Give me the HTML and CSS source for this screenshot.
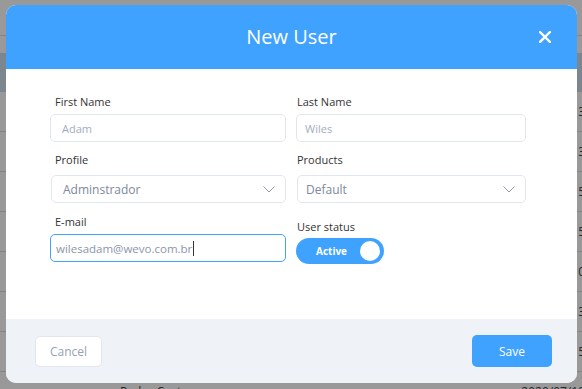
FILE: index.html
```html
<!DOCTYPE html>
<html lang="en">

<head>
    <meta charset="UTF-8">
    <title>New User</title>
    <link rel="stylesheet" href="styles.css">
</head>

<body>

    <main class="page">
        <div class="toolbar"></div>
        <div class="list">
            <div class="list-head"></div>
            <div class="list-row"><span class="col-name"></span><span class="col-date">13</span></div>
            <div class="list-row"><span class="col-name"></span><span class="col-date">13</span></div>
            <div class="list-row"><span class="col-name"></span><span class="col-date">15</span></div>
            <div class="list-row"><span class="col-name"></span><span class="col-date">15</span></div>
            <div class="list-row"><span class="col-name"></span><span class="col-date">10</span></div>
            <div class="list-row"><span class="col-name"></span><span class="col-date">13</span></div>
            <div class="list-row"><span class="col-name"></span><span class="col-date">15</span></div>
            <div class="list-row"><span class="col-name">Pedro Costa</span><span class="col-date">2020/07/18</span></div>
        </div>
    </main>

    <div class="overlay"></div>

    <section class="modal">
        <header class="modal-head">
            <h2>New User</h2>
            <button class="close" aria-label="Close">
                <svg width="12" height="12" viewBox="0 0 12 12">
                    <path d="M1 1L11 11M11 1L1 11" stroke="#fff" stroke-width="2.4" stroke-linecap="square" fill="none" />
                </svg>
            </button>
        </header>

        <div class="modal-body">
            <div class="field left row-1">
                <span class="label">First Name</span>
                <div class="control placeholder">Adam</div>
            </div>
            <div class="field right row-1">
                <span class="label">Last Name</span>
                <div class="control placeholder">Wiles</div>
            </div>

            <div class="field left row-2">
                <span class="label">Profile</span>
                <div class="control select">
                    <span>Adminstrador</span>
                    <svg width="12" height="7" viewBox="0 0 12 7">
                        <polyline points="0.5,0.5 6,6 11.5,0.5" stroke="#8f99ab" stroke-width="1" fill="none" />
                    </svg>
                </div>
            </div>
            <div class="field right row-2">
                <span class="label">Products</span>
                <div class="control select">
                    <span>Default</span>
                    <svg width="12" height="7" viewBox="0 0 12 7">
                        <polyline points="0.5,0.5 6,6 11.5,0.5" stroke="#8f99ab" stroke-width="1" fill="none" />
                    </svg>
                </div>
            </div>

            <div class="field left row-3">
                <span class="label">E-mail</span>
                <div class="control focused">wilesadam@wevo.com.br<span class="caret"></span></div>
            </div>
            <div class="field right row-3 status">
                <span class="label">User status</span>
                <div class="toggle">
                    <span>Active</span>
                    <span class="knob"></span>
                </div>
            </div>
        </div>

        <footer class="modal-foot">
            <button class="btn-cancel">Cancel</button>
            <button class="btn-save">Save</button>
        </footer>
    </section>

</body>

</html>
```

FILE: styles.css
```css
* {
    font-family: 'Open Sans', sans-serif;
    margin: 0;
    padding: 0;
    box-sizing: border-box;
}

body {
    background-color: #fff;
    overflow: hidden;
    width: 582px;
    height: 389px;
}

/* page behind the dialog */

.page {
    height: 389px;
    overflow: hidden;
}

.toolbar {
    height: 36px;
    border-bottom: 1px solid #ddd;
    margin-bottom: 17px;
}

.list-head {
    height: 39px;
    background-color: #cfe0ef;
}

.list-row {
    height: 40px;
    border-bottom: 1px solid #ddd;
    display: flex;
    align-items: center;
    justify-content: space-between;
    font-size: 12px;
    color: #444;
    padding-left: 120px;
    margin-right: -3px;
}

.col-date {
    font-size: 12px;
}

.overlay {
    position: absolute;
    inset: 0;
    background-color: rgba(0, 0, 0, 0.4);
}

/* dialog */

.modal {
    position: absolute;
    left: 6px;
    top: 5px;
    width: 571px;
    height: 378px;
    border-radius: 10px;
    overflow: hidden;
    background: #fff;
    display: flex;
    flex-direction: column;
}

.modal-head {
    height: 64px;
    background-color: #3fa2ff;
    display: grid;
    grid-template-columns: 1fr auto 1fr;
    align-items: center;
}

.modal-head h2 {
    grid-column: 2;
    color: #fff;
    font-size: 20px;
    font-weight: 400;
    line-height: 26px;
}

.close {
    grid-column: 3;
    justify-self: end;
    margin-right: 26px;
    background: none;
    border: none;
    width: 12px;
    height: 12px;
    display: flex;
}

.modal-body {
    flex: 1;
    padding: 25px 51px 0 44px;
    display: grid;
    grid-template-columns: 236px 230px;
    grid-template-rows: auto auto auto;
    column-gap: 10px;
    align-content: start;
}

.field {
    display: flex;
    flex-direction: column;
}

.label {
    font-size: 11px;
    line-height: 15px;
    color: #333;
    margin-bottom: 5px;
}

.left .label {
    padding-left: 5px;
}

.right .label {
    padding-left: 1px;
}

.row-2 {
    margin-top: 10px;
}

.row-2 .label {
    margin-bottom: 8px;
}

.row-2 .control {
    margin-left: 1px;
}

.row-3 {
    margin-top: 11px;
}

.status {
    padding-top: 5px;
}

.status .label {
    margin-bottom: 4px;
}

.control {
    height: 28px;
    border: 1px solid #e0e6ef;
    border-radius: 5px;
    background: #fff;
    display: flex;
    align-items: center;
    padding-left: 11px;
    font-size: 11.5px;
    color: #8b96a9;
}

.right .control {
    padding-left: 8px;
}

.placeholder {
    font-size: 11px;
    color: #a3adbf;
}

.select {
    justify-content: space-between;
    padding-right: 10px;
    font-size: 12px;
    color: #7d889b;
}

.select svg {
    margin-top: 1px;
}

.focused {
    border-color: #3fa2ff;
    padding-left: 5px;
}

.caret {
    width: 1px;
    height: 15px;
    background-color: #333;
    margin-left: 1px;
}

.toggle {
    width: 88px;
    height: 26px;
    border-radius: 13px;
    background-color: #3fa2ff;
    display: flex;
    align-items: center;
    justify-content: space-between;
    padding: 0 4px 0 20px;
}

.toggle span:first-child {
    color: #fff;
    font-size: 10px;
    font-weight: 700;
}

.knob {
    width: 20px;
    height: 20px;
    border-radius: 50%;
    background-color: #fff;
}

.modal-foot {
    height: 64px;
    background-color: #eff3f8;
    display: flex;
    align-items: center;
    justify-content: space-between;
    padding: 0 25px 0 29px;
}

.btn-cancel {
    width: 67px;
    height: 31px;
    border: 1px solid #e2e7ef;
    border-radius: 5px;
    background: #fff;
    color: #96a1b8;
    font-size: 12px;
}

.btn-save {
    width: 80px;
    height: 32px;
    border: none;
    border-radius: 5px;
    background-color: #3fa2ff;
    color: #fff;
    font-size: 12px;
}
```
